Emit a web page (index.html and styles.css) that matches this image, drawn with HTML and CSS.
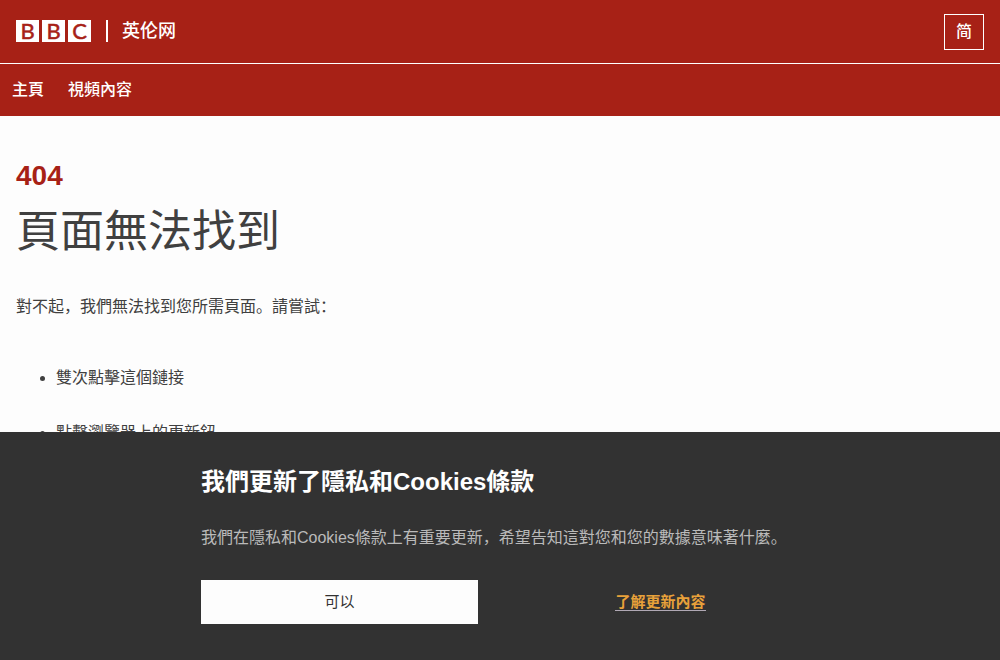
FILE: index.html
```
<!DOCTYPE html>
<html lang="zh">
<head>
<meta charset="utf-8">
<meta name="viewport" content="width=device-width, initial-scale=1">
<title>頁面無法找到 - BBC 英伦网</title>
<link rel="stylesheet" href="styles.css">
</head>
<body>
<header class="site-header">
  <div class="brand-bar">
    <a class="brand" href="#">
      <span class="blocks"><span class="block">B</span><span class="block">B</span><span class="block">C</span></span>
      <span class="divider"></span>
      <span class="service">英伦网</span>
    </a>
    <a class="script-switch" href="#">简</a>
  </div>
  <nav class="nav">
    <a class="nav-link" href="#">主頁</a>
    <a class="nav-link" href="#">視頻內容</a>
  </nav>
</header>
<main class="content">
  <h1 class="title"><span class="status">404</span>頁面無法找到</h1>
  <p class="lead">對不起，我們無法找到您所需頁面。請嘗試：</p>
  <ul class="tips">
    <li>雙次點擊這個鏈接</li>
    <li>點擊瀏覽器上的更新鈕</li>
  </ul>
</main>
<section class="consent">
  <div class="consent-inner">
    <h2 class="consent-title">我們更新了隱私和Cookies條款</h2>
    <p class="consent-text">我們在隱私和Cookies條款上有重要更新，希望告知這對您和您的數據意味著什麼。</p>
    <div class="consent-actions">
      <button class="accept" type="button">可以</button>
      <a class="more" href="#">了解更新內容</a>
    </div>
  </div>
</section>
</body>
</html>
```
FILE: styles.css
```
* {
  box-sizing: border-box;
}

body {
  margin: 0;
  background: #fdfdfd;
  color: #404040;
  font-family: "Liberation Sans", "Noto Sans CJK SC", sans-serif;
  font-size: 16px;
  line-height: 24px;
}

a {
  color: inherit;
  text-decoration: none;
}

.site-header {
  background: #a72116;
  color: #fff;
}

.brand-bar {
  display: flex;
  align-items: center;
  justify-content: space-between;
  min-height: 64px;
  padding: 0 16px;
  border-bottom: 1px solid #fff;
}

.brand {
  display: flex;
  align-items: center;
  padding-bottom: 1px;
}

.blocks {
  display: flex;
  gap: 3px;
}

.block {
  width: 23px;
  height: 22px;
  background: #fff;
  color: #a72116;
  font-family: Lato, sans-serif;
  font-size: 22px;
  line-height: 22px;
  text-align: center;
  -webkit-text-stroke: 0.5px #a72116;
}

.divider {
  width: 2px;
  height: 22px;
  margin: 0 14px 0 15px;
  background: #fff;
}

.service {
  font-size: 18px;
  font-weight: 500;
}

.script-switch {
  width: 40px;
  height: 36px;
  border: 1px solid #fff;
  font-weight: 500;
  line-height: 34px;
  text-align: center;
}

.nav {
  display: flex;
  gap: 24px;
  padding: 14px 12px;
}

.nav-link {
  font-weight: 500;
}

.content {
  padding: 40px 16px;
}

.title {
  margin: 0;
  font-size: 44px;
  font-weight: 400;
  line-height: 74px;
}

.status {
  display: block;
  color: #a72116;
  font-size: 28px;
  font-weight: 700;
  line-height: 39px;
}

.lead {
  margin: 26px 0 47px;
}

.tips {
  margin: 0;
  padding-left: 40px;
}

.tips li {
  margin-bottom: 31px;
}

.consent {
  position: fixed;
  right: 0;
  bottom: 0;
  left: 0;
  padding: 32px 16px 36px;
  background: #323232;
  color: #bababa;
}

.consent-inner {
  max-width: 598px;
  margin: 0 auto;
}

.consent-title {
  margin: 0 0 26px;
  color: #fff;
  font-size: 24px;
  line-height: 36px;
}

.consent-text {
  margin: 0 0 30px;
}

.consent-actions {
  display: grid;
  grid-template-columns: 1fr 1fr;
  gap: 44px;
  align-items: center;
}

.accept {
  height: 44px;
  border: 0;
  background: #fdfdfd;
  color: #323232;
  font: inherit;
  font-size: 15px;
}

.more {
  justify-self: center;
  border-bottom: 1px solid #b0a8b4;
  color: #e8a13a;
  font-size: 15px;
  font-weight: 700;
  line-height: 17px;
}
```
